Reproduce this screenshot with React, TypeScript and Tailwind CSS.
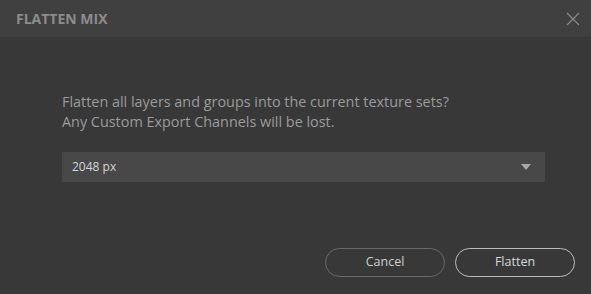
const App = () => {
  return (
    <div
      className="w-[591px] h-[294px] bg-[#383838] flex flex-col overflow-hidden"
      style={{ fontFamily: '"Open Sans", "Noto Sans", sans-serif' }}
    >
      {/* Header */}
      <div className="h-[37px] bg-[#404040] flex items-center justify-between pl-[16px] pr-[10px]">
        <span className="text-[14px] font-bold text-[#8c8c8c]">FLATTEN MIX</span>
        <button aria-label="Close" className="w-[16px] h-[16px] flex items-center justify-center">
          <svg width="14" height="14" viewBox="0 0 14 14" fill="none">
            <path d="M1 1L13 13M13 1L1 13" stroke="#8a8a8a" strokeWidth="1.2" />
          </svg>
        </button>
      </div>

      {/* Body */}
      <div className="flex-1 flex flex-col px-[62px] pt-[55px]">
        <p className="text-[14.4px] leading-[19.5px] text-[#9b9b9b]">
          Flatten all layers and groups into the current texture sets?
          <br />
          Any Custom Export Channels will be lost.
        </p>

        <div className="mt-[21px] h-[30px] w-[483px] bg-[#484848] flex items-center justify-between pl-[10px] pr-[14px]">
          <span className="text-[12px] text-[#d4d4d4]">2048 px</span>
          <svg width="10" height="6" viewBox="0 0 10 6">
            <path d="M0 0H10L5 6Z" fill="#a8a8a8" />
          </svg>
        </div>
      </div>

      {/* Footer */}
      <div className="flex justify-end gap-[10px] pr-[16px] pb-[17px]">
        <button className="w-[120px] h-[29px] rounded-full border border-[#6a6a6a] text-[12.5px] text-[#cfcfcf]">
          Cancel
        </button>
        <button className="w-[120px] h-[29px] rounded-full border border-[#bdbdbd] text-[12.5px] text-[#d8d8d8]">
          Flatten
        </button>
      </div>
    </div>
  );
};

export default App;
